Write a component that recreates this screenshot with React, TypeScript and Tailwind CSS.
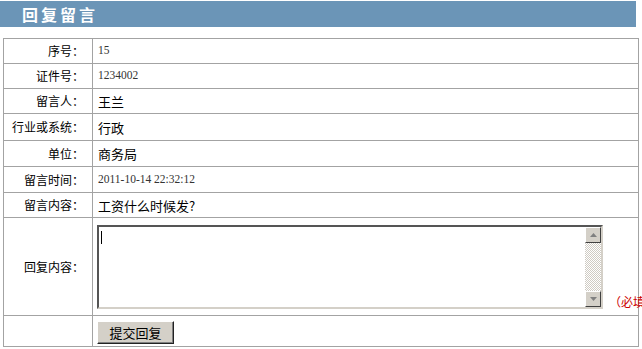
import React from "react";

interface InfoRow {
  label: string;
  value: string;
  serif?: boolean;
  h: string;
}

const rows: InfoRow[] = [
  { label: "序号：", value: "15", serif: true, h: "h-[25px]" },
  { label: "证件号：", value: "1234002", serif: true, h: "h-[25px]" },
  { label: "留言人：", value: "王兰", h: "h-[25px]" },
  { label: "行业或系统：", value: "行政", h: "h-[27px]" },
  { label: "单位：", value: "商务局", h: "h-[26px]" },
  { label: "留言时间：", value: "2011-10-14 22:32:12", serif: true, h: "h-[26px]" },
  { label: "留言内容：", value: "工资什么时候发?", h: "h-[25px]" },
];

const cjk = "font-['SimSun','Noto_Sans_CJK_SC',sans-serif]";

const ScrollArrow = ({ up }: { up?: boolean }) => (
  <div className="w-[16px] h-[16px] bg-[#d4d0c8] border border-t-white border-l-white border-r-[#404040] border-b-[#404040] flex items-center justify-center">
    <svg width="7" height="4" viewBox="0 0 7 4">
      <path d={up ? "M0 4 L3.5 0 L7 4 Z" : "M0 0 L3.5 4 L7 0 Z"} fill="#808080" />
    </svg>
  </div>
);

const App = () => {
  return (
    <div className={`w-[642px] h-[349px] overflow-hidden bg-white ${cjk}`}>
      <div className="mt-[1px] w-[636px] h-[26px] bg-[#6b95b7] flex items-center pl-[22px]">
        <span className="text-white text-[16px] font-bold tracking-[3px] leading-none">回复留言</span>
      </div>
      <div className="pl-[3px] mt-[11px]">
        <table className="w-[636px] table-fixed border-collapse border border-[#8e8e8e] text-black">
          <colgroup>
            <col className="w-[89px]" />
            <col />
          </colgroup>
          <tbody>
            {rows.map((row, id) => (
              <tr key={id} className={row.h}>
                <td className="border border-[#a3a3a3] text-right pr-[8px] text-[12px] leading-none whitespace-nowrap">
                  {row.label}
                </td>
                <td
                  className={
                    row.serif
                      ? "border border-[#a3a3a3] pl-[5px] font-['Liberation_Serif',serif] text-[11.5px] text-[#333] leading-none"
                      : "border border-[#a3a3a3] pl-[5px] text-[13px] leading-none"
                  }
                >
                  {row.value}
                </td>
              </tr>
            ))}
            <tr className="h-[98px]">
              <td className="border border-[#a3a3a3] text-right pr-[8px] text-[12px] leading-none whitespace-nowrap">
                回复内容：
              </td>
              <td className="border border-[#a3a3a3] pl-[4px] align-middle">
                <div className="flex items-end gap-[6px] whitespace-nowrap">
                  <div className="w-[506px] h-[84px] shrink-0 flex border-2 border-t-[#555] border-l-[#555] border-r-[#d4d0c8] border-b-[#d4d0c8] bg-white">
                    <div className="flex-1 relative">
                      <span className="absolute left-[2px] top-[4px] w-[1px] h-[13px] bg-black" />
                      <textarea className="w-full h-full resize-none outline-none bg-transparent text-[12px]" />
                    </div>
                    <div className="w-[16px] flex flex-col bg-[repeating-conic-gradient(#ffffff_0_25%,#cfcbc3_0_50%)] bg-[length:2px_2px]">
                      <ScrollArrow up />
                      <div className="flex-1" />
                      <ScrollArrow />
                    </div>
                  </div>
                  <span className="text-[#cc0000] text-[12px] leading-none mb-[1px]">（必填）</span>
                </div>
              </td>
            </tr>
            <tr className="h-[31px]">
              <td className="border border-[#a3a3a3]" />
              <td className="border border-[#a3a3a3] pl-[4px]">
                <button className="w-[77px] h-[23px] bg-[#d4d0c8] border border-t-white border-l-white border-r-[#222] border-b-[#222] shadow-[inset_-1px_-1px_0_#808080] text-[13px] leading-none text-black">
                  提交回复
                </button>
              </td>
            </tr>
          </tbody>
        </table>
      </div>
    </div>
  );
};

export default App;
